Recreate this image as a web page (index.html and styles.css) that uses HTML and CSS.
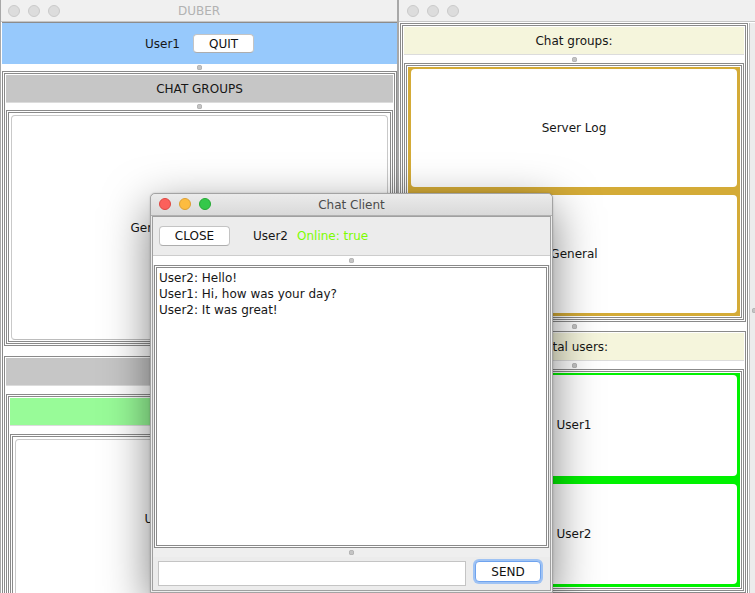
FILE: index.html
```html
<!DOCTYPE html>
<html>
<head>
<meta charset="utf-8">
<title>DUBER</title>
<link rel="stylesheet" href="styles.css">
</head>
<body>
<div class="desk">

  <!-- Left window: DUBER -->
  <div class="win left-win">
    <div class="titlebar inactive">
      <div class="lights"><i></i><i></i><i></i></div>
      <span class="wtitle">DUBER</span>
    </div>
    <div class="win-body lb">
      <div class="top-blue">
        <span>User1</span>
        <button class="mbtn quit">QUIT</button>
      </div>
      <div class="divider d7"><i class="dot"></i></div>
      <div class="box grow">
        <div class="box groups-pane-l">
          <div class="hdr gray">CHAT GROUPS</div>
          <div class="divider d7"><i class="dot"></i></div>
          <div class="box grow"><div class="box grow listarea">
            <div class="lbtn plain">General (User1, User2)</div>
          </div></div>
        </div>
        <div class="divider d10"><i class="dot"></i></div>
        <div class="box grow">
          <div class="hdr gray">USERS</div>
          <div class="divider d8"><i class="dot"></i></div>
          <div class="box grow"><div class="box grow">
            <div class="hdr green">ONLINE</div>
            <div class="divider d8"><i class="dot"></i></div>
            <div class="box grow"><div class="box grow listarea">
              <div class="lbtn plain users-btn">User2 Online: true</div>
            </div></div>
          </div></div>
        </div>
      </div>
    </div>
  </div>

  <!-- Right window -->
  <div class="win right-win">
    <div class="titlebar inactive">
      <div class="lights"><i></i><i></i><i></i></div>
    </div>
    <div class="win-body rb">
      <div class="rmain">
        <div class="box grow">
          <div class="box groups-pane-r">
            <div class="hdr beige">Chat groups:</div>
            <div class="divider d8"><i class="dot"></i></div>
            <div class="box grow"><div class="box grow">
              <div class="colorlist gold">
                <div class="lbtn">Server Log</div>
                <div class="lbtn">General</div>
              </div>
            </div></div>
          </div>
          <div class="divider d9"><i class="dot"></i></div>
          <div class="box grow">
            <div class="hdr beige">Total users:</div>
            <div class="divider d8"><i class="dot"></i></div>
            <div class="box grow"><div class="box grow">
              <div class="colorlist lime">
                <div class="lbtn">User1</div>
                <div class="lbtn">User2</div>
              </div>
            </div></div>
          </div>
        </div>
      </div>
      <div class="vsplit"><i class="dot"></i></div>
    </div>
  </div>

  <!-- Chat Client window -->
  <div class="win chat">
    <div class="titlebar active">
      <div class="lights"><i class="r"></i><i class="y"></i><i class="g"></i></div>
      <span class="wtitle">Chat Client</span>
    </div>
    <div class="chat-wrap">
      <div class="cframe">
        <div class="chat-top">
          <button class="mbtn close">CLOSE</button>
          <span class="peer">User2</span>
          <span class="online">Online: true</span>
        </div>
        <div class="divider d9"><i class="dot"></i></div>
        <div class="box grow"><div class="box grow">
          <div class="msgs">
            <div>User2: Hello!</div>
            <div>User1: Hi, how was your day?</div>
            <div>User2: It was great!</div>
          </div>
        </div></div>
        <div class="divider d9 grey"><i class="dot"></i></div>
        <div class="chat-bottom">
          <div class="input"></div>
          <button class="mbtn send">SEND</button>
        </div>
      </div>
    </div>
  </div>

</div>
</body>
</html>
```

FILE: styles.css
```css
* { box-sizing: border-box; margin: 0; padding: 0; }
body {
  margin: 0;
  font-family: "DejaVu Sans", "Liberation Sans", sans-serif;
  font-size: 12px;
  color: #161616;
  background: #fff;
}
.desk {
  position: relative;
  width: 755px;
  height: 593px;
  overflow: hidden;
  background: #fff;
}

/* windows */
.win {
  position: absolute;
  display: flex;
  flex-direction: column;
  background: #ececec;
}
.left-win {
  left: 0;
  top: 0;
  width: 398px;
  height: 610px;
  border-left: 1px solid #a8a8a8;
  border-right: 1px solid #a8a8a8;
}
.right-win {
  left: 398px;
  top: 0;
  width: 380px;
  height: 595px;
  border-left: 1px solid #a8a8a8;
}
.chat {
  left: 150px;
  top: 193px;
  width: 403px;
  height: 400px;
  border: 1px solid #a3a3a3;
  border-radius: 5px 5px 0 0;
  box-shadow: 0 14px 46px rgba(0, 0, 0, 0.5), 0 0 2px rgba(0, 0, 0, 0.2);
}

/* title bars */
.titlebar {
  flex: none;
  height: 22px;
  position: relative;
  display: flex;
  align-items: center;
  justify-content: center;
  border-bottom: 1px solid #c6c6c6;
  background: #ececec;
  font-size: 12px;
}
.titlebar.inactive { color: #b2b2b2; background: #f0f0f0; }
.titlebar.active {
  color: #4b4b4b;
  background: linear-gradient(#ebebeb, #d9d9d9);
  border-bottom-color: #b0b0b0;
  border-radius: 5px 5px 0 0;
}
.wtitle { padding-top: 1px; }
.lights {
  position: absolute;
  left: 7px;
  top: 5px;
  display: flex;
  gap: 8px;
}
.right-win .lights { left: 8px; }
.chat .lights { left: 8px; top: 4px; }
.lights i {
  display: block;
  width: 12px;
  height: 12px;
  border-radius: 50%;
  background: #dcdcdc;
  border: 1px solid #cacaca;
}
.lights i.r { background: #fc605b; border-color: #de4741; }
.lights i.y { background: #fdbc40; border-color: #dda032; }
.lights i.g { background: #34c84a; border-color: #24a933; }

/* generic panes */
.win-body { flex: 1; display: flex; flex-direction: column; min-height: 0; }
.lb { padding-left: 1px; background: #fff; }
.rb { flex-direction: row; padding-top: 1px; background: #fff; }
.rmain { width: 350px; flex: none; padding: 0 1px; display: flex; flex-direction: column; background: #fff; }
.vsplit {
  flex: 1;
  background: #ececec;
  border-left: 1px solid #bdbdbd;
  position: relative;
}
.vsplit .dot { position: absolute; left: 2px; top: 285px; }

.box {
  border: 1px solid #8a8a8a;
  padding: 1px;
  display: flex;
  flex-direction: column;
  background: #fff;
  min-height: 0;
}
.grow { flex: 1; }
.groups-pane-l { height: 273px; flex: none; }
.groups-pane-r { height: 297px; flex: none; }

.divider {
  flex: none;
  display: flex;
  align-items: center;
  justify-content: center;
  background: #fff;
}
.divider.grey { background: #efefef; }
.d7 { height: 7px; }
.d8 { height: 8px; }
.d9 { height: 9px; }
.d10 { height: 10px; }
.dot {
  display: block;
  width: 5px;
  height: 5px;
  border-radius: 50%;
  background: #c4c4c4;
  box-shadow: inset 0 0 0 0.5px #a9a9a9;
}

.top-blue {
  flex: none;
  height: 42px;
  background: #97c9fc;
  border-top: 1px solid #8c8c8c;
  display: flex;
  align-items: center;
  justify-content: center;
  gap: 13px;
}

.hdr {
  flex: none;
  height: 28px;
  display: flex;
  align-items: center;
  justify-content: center;
  border-bottom: 1px solid #dcdcdc;
}
.hdr.gray { background: #c6c6c6; }
.hdr.beige { background: #f5f5dc; height: 28px; }
.hdr.green { background: #98fb98; }

.listarea { background: #fff; }
.lbtn {
  flex: 1;
  background: #fff;
  border-radius: 4px;
  display: flex;
  align-items: center;
  justify-content: center;
}
.lbtn.plain {
  border: 1px solid #c9c9c9;
  border-bottom-color: #bcbcbc;
  margin: 1px 1px 0 1px;
}
.users-btn { margin-top: 1px; }

.colorlist {
  flex: 1;
  display: flex;
  flex-direction: column;
  gap: 8px;
  padding: 2px 3px 3px 3px;
}
.gold { background: #d4ab37; }
.lime { background: #00f200; }

/* mac push buttons */
.mbtn {
  font-family: "DejaVu Sans", "Liberation Sans", sans-serif;
  font-size: 12px;
  color: #111;
  background: #fff;
  border: 1px solid #c4c4c4;
  border-bottom-color: #adadad;
  border-radius: 4px;
  display: flex;
  align-items: center;
  justify-content: center;
}
.quit { width: 61px; height: 19px; }
.close { width: 71px; height: 20px; }
.send {
  width: 66px;
  height: 21px;
  margin-left: 9px;
  border-color: #6fa3ee;
  box-shadow: 0 0 0 2px #9fc3f4;
}

/* chat window */
.chat-wrap {
  flex: 1;
  display: flex;
  flex-direction: column;
  padding: 0 1px 1px 1px;
  min-height: 0;
}
.cframe {
  flex: 1;
  display: flex;
  flex-direction: column;
  border: 1px solid #a0a0a0;
  min-height: 0;
}
.chat-top {
  flex: none;
  height: 39px;
  display: flex;
  align-items: center;
  padding-left: 6px;
  border-bottom: 1px solid #cdcdcd;
}
.peer { margin-left: 23px; }
.online { margin-left: 9px; color: #7cfc00; }
.cframe > .box { margin: 0 1px; }
.msgs {
  flex: 1;
  background: #fff;
  padding: 1px 0 0 1px;
  line-height: 16px;
}
.chat-bottom {
  flex: none;
  height: 33px;
  display: flex;
  align-items: flex-start;
  padding: 4px 0 0 5px;
}
.input {
  width: 308px;
  height: 25px;
  background: #fff;
  border: 1px solid #c4c4c4;
}
```
